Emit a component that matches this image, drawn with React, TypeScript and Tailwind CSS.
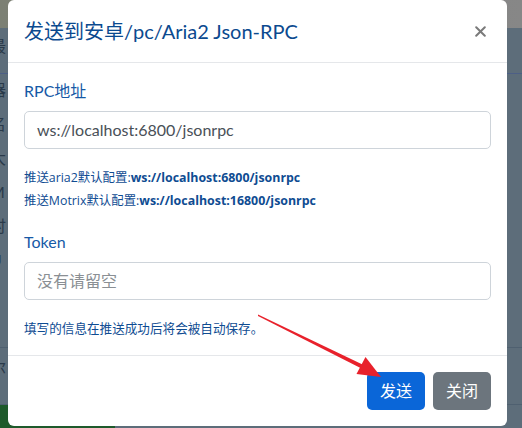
import React from "react";

const font = { fontFamily: 'Lato, "Noto Sans CJK SC", sans-serif' };
const helpFont = { fontFamily: '"Open Sans", "Noto Sans CJK SC", sans-serif' };

function Field({ label, value, placeholder }: { label: string; value?: string; placeholder?: string }) {
  return (
    <div>
      <div className="text-[16px] leading-6 text-[#1659a6] mb-2">{label}</div>
      <div className="h-[38px] border border-[#ced4da] rounded-[5px] px-3 flex items-center text-[16px]">
        {value ? (
          <span className="text-[#495057]">{value}</span>
        ) : (
          <span className="text-[#8a8f94]">{placeholder}</span>
        )}
      </div>
    </div>
  );
}

export default function App() {
  return (
    <div className="relative w-[522px] h-[428px] overflow-hidden bg-[#5d6d7a]" style={font}>
      {/* page behind the dim overlay */}
      <div className="flex flex-col h-full">
        <div className="h-[28px] bg-gradient-to-r from-[#7c8074] to-[#878787]" />
        <div className="h-[46px] border-b border-[#4d5f86] text-[#2a3a4a] text-[16px] pt-[6px] -ml-[10px]">最</div>
        <div className="flex-1 -ml-[10px] text-[#2a3a4a] text-[16px] flex flex-col gap-[10px] pt-[4px]">
          <span>器</span>
          <span>名</span>
          <span>大</span>
          <span>M</span>
          <span>时</span>
          <span>U</span>
        </div>
        <div className="h-[57px] border-t border-[#4f6070] text-[#2a3a4a] text-[16px] -ml-[10px] pt-[8px]">尔</div>
        <div className="h-[24px] border-t border-[#4f6070] flex">
          <div className="w-[115px] bg-[#1e5a2b]" />
          <div className="flex-1" />
        </div>
      </div>

      {/* modal */}
      <div className="absolute left-[8px] top-0 w-[499px] h-[426px] bg-white rounded-[6px] flex flex-col">
        <div className="h-[63px] border-b border-[#e5e7ea] px-4 flex items-center justify-between">
          <span className="text-[20px] text-[#0b4a8f]">发送到安卓/pc/Aria2 Json-RPC</span>
          <svg width="11" height="11" viewBox="0 0 11 11" className="mr-[5px]">
            <path d="M1.2 1.2 L9.8 9.8 M9.8 1.2 L1.2 9.8" stroke="#7a7a7a" strokeWidth="2" strokeLinecap="round" />
          </svg>
        </div>
        <div className="px-4 pt-4 pb-4 border-b border-[#e5e7ea] flex flex-col">
          <Field label="RPC地址" value="ws://localhost:6800/jsonrpc" />
          <div className="mt-[17px] text-[12.4px] leading-[23px] text-[#0f4c92]" style={helpFont}>
            <div>
              推送aria2默认配置:<b>ws://localhost:6800/jsonrpc</b>
            </div>
            <div>
              推送Motrix默认配置:<b>ws://localhost:16800/jsonrpc</b>
            </div>
          </div>
          <div className="mt-[18px]">
            <Field label="Token" placeholder="没有请留空" />
          </div>
          <div className="mt-[19px] text-[12.6px] leading-5 text-[#0f4c92]">填写的信息在推送成功后将会被自动保存。</div>
        </div>
        <div className="flex-1 flex items-start justify-end gap-2 px-4 pt-4">
          <button className="h-[38px] w-[58px] rounded-[5px] bg-[#0a66d8] text-white text-[16px]">发送</button>
          <button className="h-[38px] w-[58px] rounded-[5px] bg-[#6c757d] text-white text-[16px]">关闭</button>
        </div>
      </div>

      {/* red annotation arrow */}
      <svg className="absolute left-0 top-0 pointer-events-none" width="522" height="428">
        <polygon points="258,314.5 258,316 361.5,368.5 362.5,364.5" fill="#e8212b" />
        <polygon points="381,377 356.5,374 365.5,357" fill="#e8212b" />
      </svg>
    </div>
  );
}
